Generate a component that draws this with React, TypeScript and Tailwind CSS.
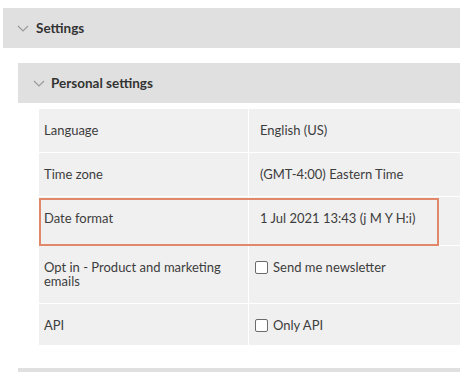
import { useState } from "react"

function Chevron() {
  return (
    <svg width="12" height="7" viewBox="0 0 12 7" fill="none" className="shrink-0">
      <path d="M1 1l5 5 5-5" stroke="#9a9a9a" strokeWidth="1.2" />
    </svg>
  )
}

function Checkbox({ label }: { label: string }) {
  const [checked, setChecked] = useState(false)
  return (
    <label className="-ml-[5px] flex items-center gap-[5px] cursor-pointer">
      <span
        onClick={() => setChecked(!checked)}
        className="h-[13px] w-[13px] rounded-[2px] border border-[#6b6b6b] bg-white"
      />
      <span>{label}</span>
    </label>
  )
}

export default function App() {
  const rows = [
    { label: "Language", value: "English (US)", h: "h-[43px]" },
    { label: "Time zone", value: "(GMT-4:00) Eastern Time", h: "h-[43px]" },
    { label: "Date format", value: "1 Jul 2021 13:43 (j M Y H:i)", h: "h-[48px]", highlight: true },
    { label: "Opt in - Product and marketing emails", check: "Send me newsletter", h: "h-[57px]" },
    { label: "API", check: "Only API", h: "h-[41px]" },
  ]

  return (
    <div className="h-[372px] w-[460px] overflow-hidden bg-white pt-[8px] pl-[3px] text-[#3d3d3d] font-['Lato','Liberation_Sans',sans-serif]">
      {/* Settings header */}
      <div className="flex h-[40px] items-center gap-[7px] bg-[#e0e0e0] pl-[14px]">
        <Chevron />
        <span className="text-[13.5px] font-bold text-[#333]">Settings</span>
      </div>

      <div className="ml-[15px] mt-[15px]">
        {/* Personal settings header */}
        <div className="flex h-[40px] items-center gap-[6px] bg-[#e0e0e0] pl-[15px]">
          <Chevron />
          <span className="text-[13.5px] font-bold text-[#333]">Personal settings</span>
        </div>

        <div className="ml-[21px] mt-[6px] flex flex-col gap-[1px] bg-white">
          {rows.map((row) => (
            <div key={row.label} className={`relative flex ${row.h} text-[13px] leading-[14px]`}>
              <div className="w-[209px] bg-[#f0f0f0] pl-[5px] pr-[14px] pt-[14px]">{row.label}</div>
              <div className="ml-[1px] flex-1 bg-[#f0f0f0] pl-[11px] pt-[14px]">
                {row.check ? <Checkbox label={row.check} /> : row.value}
              </div>
              {row.highlight && (
                <div className="pointer-events-none absolute left-0 top-[1px] h-[48px] w-[400px] border-2 border-[#e2886a]" />
              )}
            </div>
          ))}
        </div>

        <div className="mt-[23px] h-[10px] bg-[#e0e0e0]" />
      </div>
    </div>
  )
}
